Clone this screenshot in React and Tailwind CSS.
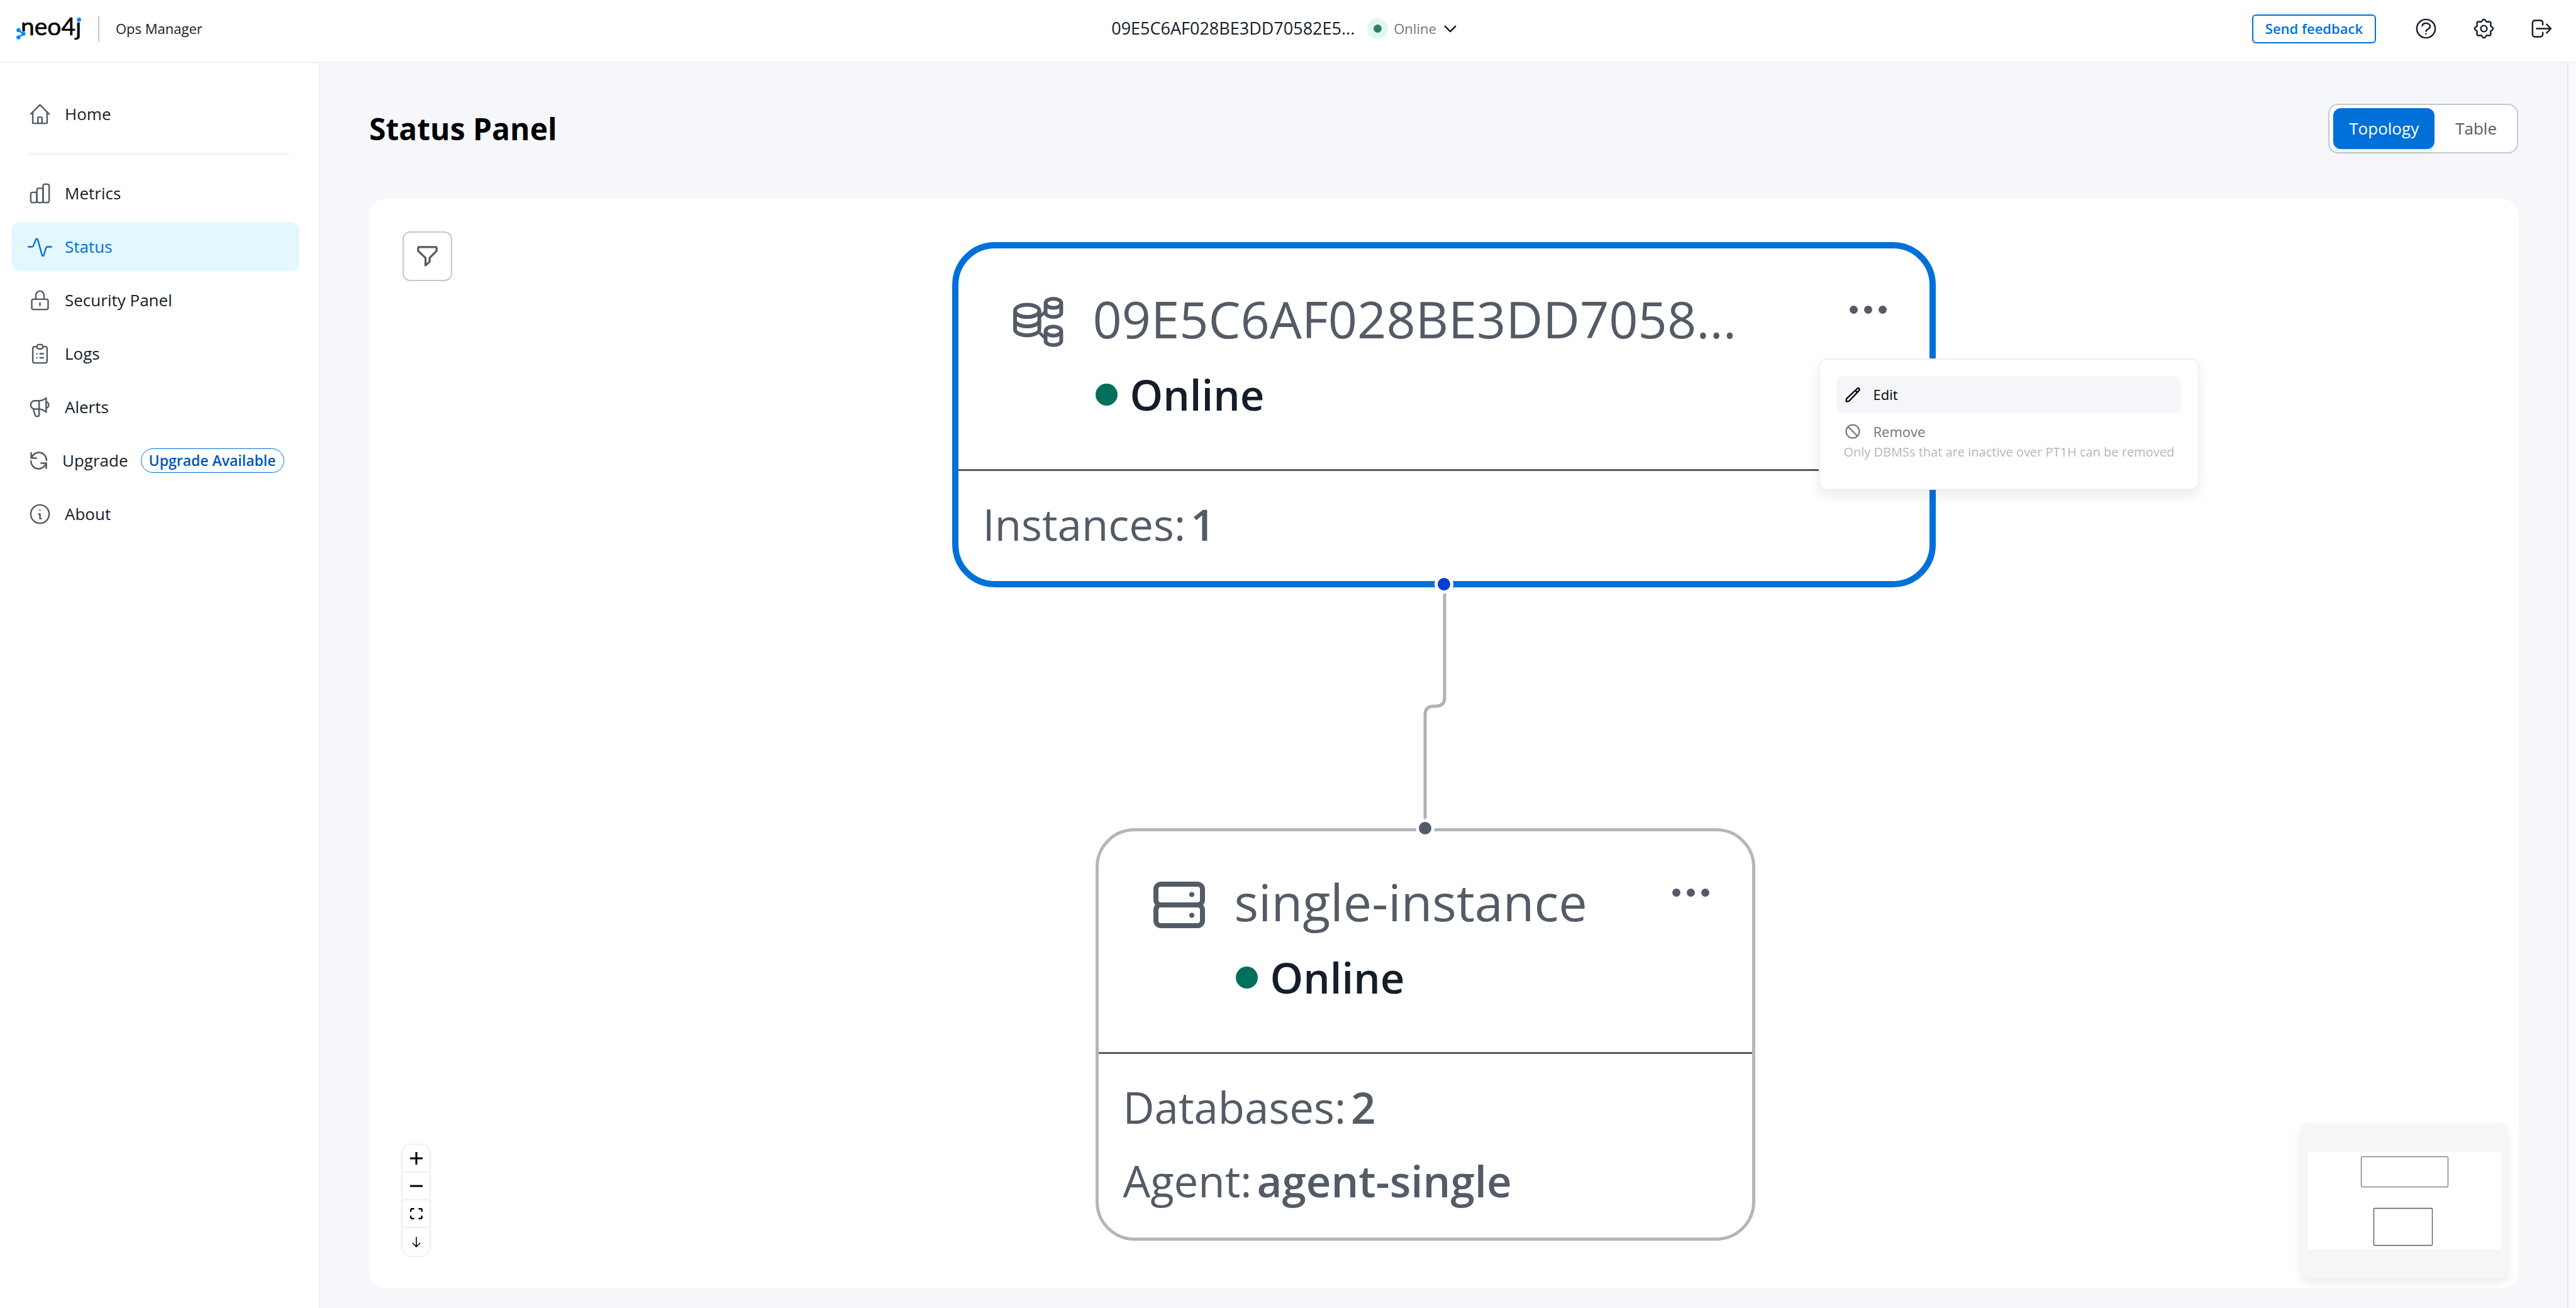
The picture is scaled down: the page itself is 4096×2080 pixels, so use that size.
import React from "react";

function Icon({ className = "size-[39px]", width = 1.5, children }) {
  return (
    <svg
      viewBox="0 0 24 24"
      fill="none"
      stroke="currentColor"
      strokeWidth={width}
      strokeLinecap="round"
      strokeLinejoin="round"
      className={`shrink-0 ${className}`}
      aria-hidden="true"
    >
      {children}
    </svg>
  );
}

const HomeIcon = () => (
  <Icon>
    <path d="M2.9 12 12 2.9 21.1 12" />
    <path d="M5 10v10.1a.9.9 0 0 0 .9.9h12.2a.9.9 0 0 0 .9-.9V10" />
    <path d="M10 21v-5.1a.9.9 0 0 1 .9-.9h2.2a.9.9 0 0 1 .9.9V21" />
  </Icon>
);

const MetricsIcon = () => (
  <Icon>
    <rect x="3" y="11" width="6" height="10" rx="1.8" />
    <rect x="9" y="7" width="6" height="14" rx="1.8" />
    <rect x="15" y="3" width="6" height="18" rx="1.8" />
  </Icon>
);

const StatusIcon = () => (
  <Icon>
    <path d="M.75 12h3.3c.7 0 1.3-.4 1.5-1l2.5-6.3c.3-.8 1.5-.8 1.7 0l4.4 15.6c.2.8 1.4.8 1.6 0l2.2-7.3c.2-.6.8-1 1.4-1h3.9" />
  </Icon>
);

const LockIcon = () => (
  <Icon>
    <rect x="4" y="11" width="16" height="10" rx="1.6" />
    <path d="M8 11V7a4 4 0 0 1 8 0v4M12 14.7v2.4" />
  </Icon>
);

const LogsIcon = () => (
  <Icon>
    <path d="M9 5H6.8A1.8 1.8 0 0 0 5 6.8V19.2A1.8 1.8 0 0 0 6.8 21h10.4A1.8 1.8 0 0 0 19 19.2V6.8A1.8 1.8 0 0 0 17.2 5H15" />
    <rect x="9" y="3" width="6" height="4.2" rx="2" />
    <path d="M9 12h.01M9 16h.01M12.2 12h3M12.2 16h3" />
  </Icon>
);

const AlertsIcon = () => (
  <Icon>
    <path d="M11.2 5.7H7.1a4.1 4.1 0 0 0 0 8.2h4.1Z" />
    <path d="M11.2 5.7c2.6-.1 4.9-1 6.9-2.7v13.9c-2-1.8-4.3-2.9-6.9-3" />
    <path d="M18.1 6.7a3.2 3.2 0 0 1 0 6.2" />
    <path d="m5.6 14 1.7 5.7c.6 2 3.9 1.7 3.9-.5V13.9" />
  </Icon>
);

const UpgradeIcon = () => (
  <Icon className="size-[35px]" width={1.7}>
    <path d="M3.8 3.6v5.6h5.6M4.3 8.9a8.3 8.3 0 0 1 16.2 2.7" />
    <path d="M20.3 20.4v-5.6h-5.6M19.8 15.1A8.3 8.3 0 0 1 3.6 12.5" />
  </Icon>
);

const InfoIcon = () => (
  <Icon>
    <circle cx="12" cy="12" r="9" />
    <path d="M10.8 12H12v4.4h1.3M12 8.1h.01" />
  </Icon>
);

const HelpIcon = () => (
  <Icon>
    <circle cx="12" cy="12" r="9" />
    <path d="M8.3 9.3c.2-1.5 1.7-2.5 3.8-2.5 2.2 0 3.9 1.2 3.9 3.1 0 1.5-1 2.1-2.2 2.7-1 .5-1.7 1-1.7 2M12 17.1h.01" />
  </Icon>
);

const gearOutline =
  Array.from({ length: 96 }, (_, i) => {
    const a = (i / 96) * Math.PI * 2;
    const r = 8.1 + 0.9 * Math.cos(8 * a);
    return `${i ? "L" : "M"}${(12 + r * Math.sin(a)).toFixed(2)} ${(12 - r * Math.cos(a)).toFixed(2)}`;
  }).join("") + "Z";

const GearIcon = () => (
  <Icon>
    <path d={gearOutline} />
    <circle cx="12" cy="12" r="3" />
  </Icon>
);

const LogoutIcon = () => (
  <Icon>
    <path d="M13 8.2V6.3A2.3 2.3 0 0 0 10.7 4H5.3A2.3 2.3 0 0 0 3 6.3v11.4A2.3 2.3 0 0 0 5.3 20h5.4a2.3 2.3 0 0 0 2.3-2.3v-1.9" />
    <path d="M7 12h14M16.8 7.8 21 12l-4.2 4.2" />
  </Icon>
);

const FunnelIcon = () => (
  <Icon width={2}>
    <path d="M3.6 3h16.8a.6.6 0 0 1 .6.6V6.8l-6.8 6.8v3.7L10.2 21v-7.4L3 6.8V3.6A.6.6 0 0 1 3.6 3Z" />
  </Icon>
);

const PencilIcon = () => (
  <Icon className="size-[28px]" width={2}>
    <path d="m16.9 4.5 1.4-1.4a1.9 1.9 0 0 1 2.6 2.6L7.2 20.1a2 2 0 0 1-.9.5L3.1 21.1l.3-3.3a2 2 0 0 1 .5-1Zm-1.4 1.4 2.7 2.7" />
  </Icon>
);

const ForbidIcon = () => (
  <Icon className="size-[28px]" width={1.8}>
    <circle cx="12" cy="12" r="9" />
    <path d="m5.7 5.7 12.6 12.6" />
  </Icon>
);

const ClusterIcon = () => (
  <svg viewBox="0 0 80 80" fill="none" stroke="currentColor" strokeWidth="6" className="size-20 shrink-0" aria-hidden="true">
    <ellipse cx="22.3" cy="22.3" rx="19.3" ry="9.8" />
    <path d="M3 22v30c0 5 8.6 9.3 19.3 9.3S41.6 57 41.6 52V22" />
    <path d="M3 37.5c0 5.2 8.6 9.5 19.3 9.5s19.3-4.3 19.3-9.5" />
    <ellipse cx="64" cy="10.3" rx="12.4" ry="7.3" />
    <path d="M51.6 10.3v15.2c0 3.6 5.5 6.5 12.4 6.5s12.4-2.9 12.4-6.5V10.3" />
    <ellipse cx="64" cy="54.5" rx="12.4" ry="7.3" />
    <path d="M51.6 54.5v15.7c0 3.6 5.5 6.5 12.4 6.5s12.4-2.9 12.4-6.5V54.5" />
    <path d="m42.5 31.5 8-7.5M42.5 57.5l8 8" strokeWidth="5" />
  </svg>
);

const ServerIcon = () => (
  <svg viewBox="0 0 82 80" fill="none" stroke="currentColor" strokeWidth="8" className="h-20 w-[82px] shrink-0" aria-hidden="true">
    <rect x="4" y="7" width="74" height="33" rx="8" />
    <rect x="4" y="40" width="74" height="33" rx="8" />
    <circle cx="61" cy="23.5" r="4" fill="currentColor" stroke="none" />
    <circle cx="61" cy="56.5" r="4" fill="currentColor" stroke="none" />
  </svg>
);

function Logo() {
  return (
    <svg viewBox="0 -6 106 52" className="h-[52px] w-[106px]" role="img" aria-label="neo4j">
      <text x="7" y="29.6" fontSize="39" fontFamily="Lato, sans-serif" fill="#000" stroke="#000" strokeWidth="0.6">
        neo4j
      </text>
      <rect x="0" y="24" width="15" height="12" fill="#fff" />
      <rect x="94" y="-2" width="12" height="10" fill="#fff" />
      <g fill="#018bff">
        <path d="M3.4 22 11.2 27.7l-7.8 5.8" fill="none" stroke="#018bff" strokeWidth="2.4" />
        <circle cx="3.4" cy="22" r="3.3" />
        <circle cx="11.2" cy="27.7" r="3.3" />
        <circle cx="3.4" cy="33.5" r="3.3" />
        <circle cx="99.6" cy="5.4" r="3.3" />
      </g>
    </svg>
  );
}

const nav = [
  { label: "Metrics", icon: MetricsIcon },
  { label: "Status", icon: StatusIcon, active: true },
  { label: "Security Panel", icon: LockIcon },
  { label: "Logs", icon: LogsIcon },
  { label: "Alerts", icon: AlertsIcon },
  { label: "Upgrade", icon: UpgradeIcon, badge: "Upgrade Available" },
  { label: "About", icon: InfoIcon },
];

function NavItem({ label, icon: Glyph, active, badge }) {
  return (
    <a
      href="#"
      aria-current={active ? "page" : undefined}
      className={`flex h-[78px] items-center gap-5 rounded-[13px] px-[26px] text-[26px] ${
        active ? "bg-[#e3f7ff] text-[#0070d9]" : "text-[#151d29]"
      }`}
    >
      <span className={active ? "text-[#0070d9]" : "text-[#535b66]"}>
        <Glyph />
      </span>
      {label}
      {badge && (
        <span className="flex h-[39px] items-center rounded-full border border-[#0070d9] px-3 text-[23px] font-semibold whitespace-nowrap text-[#0056b3]">
          {badge}
        </span>
      )}
    </a>
  );
}

function Header() {
  return (
    <header className="flex h-[100px] shrink-0 items-start border-b-2 border-[#eef1f6] bg-white">
      <div className="flex h-[91px] w-full items-center justify-between pr-[35px] pl-[26px]">
        <div className="flex flex-1 items-center">
          <Logo />
          <div className="ml-6 h-10 w-[2px] bg-[#c4c8cd]" />
          <span className="ml-[26px] text-[22px] text-[#151d29]">Ops Manager</span>
        </div>
        <button type="button" className="flex items-center text-[27px] text-[#151d29]">
          09E5C6AF028BE3DD70582E5...
          <span className="ml-5 flex size-[33px] items-center justify-center rounded-full bg-[#dff9ef]">
            <span className="size-[13px] rounded-full bg-[#327d60]" />
          </span>
          <span className="ml-[9px] text-[22px] text-[#717682]">Online</span>
          <Icon className="ml-2 size-[28px]" width={2.2}>
            <path d="m5 8.5 7 7 7-7" />
          </Icon>
        </button>
        <div className="flex flex-1 items-center justify-end text-[#151d29]">
          <button
            type="button"
            className="mr-[60px] h-[46px] rounded-[6px] border-2 border-[#0070d9] px-[19px] text-[22px] font-semibold text-[#0070d9]"
          >
            Send feedback
          </button>
          <div className="flex gap-[53px]">
            <button type="button" aria-label="Help"><HelpIcon /></button>
            <button type="button" aria-label="Settings"><GearIcon /></button>
            <button type="button" aria-label="Log out"><LogoutIcon /></button>
          </div>
        </div>
      </div>
    </header>
  );
}

function Node({ className, icon, title, rows }) {
  return (
    <article className={`absolute flex flex-col bg-white text-[#535b66] ${className}`}>
      <div className="flex h-[351px] items-start pr-[68px] pl-[87px]">
        <div className="pt-[57px]">
          <div className="flex items-end gap-[47px]">
            <span className="mb-[10px]">{icon}</span>
            <h2 className="text-[81px] leading-[110px] whitespace-nowrap">{title}</h2>
          </div>
          <div className="mt-[30px] ml-[131px] flex items-center gap-5 text-[67px] leading-[70px] font-semibold text-[#151d29]">
            <span className="size-[35px] rounded-full bg-[#006f5b]" />
            Online
          </div>
        </div>
        <button type="button" aria-label={`Options for ${title}`} className="mt-[91px] ml-auto flex gap-[10px]">
          <span className="size-[13px] rounded-full bg-current" />
          <span className="size-[13px] rounded-full bg-current" />
          <span className="size-[13px] rounded-full bg-current" />
        </button>
      </div>
      <dl className="border-t-[3px] border-[#535b66] px-[39px] pt-[26px] pb-8 text-[69px] leading-[117px]">
        {rows.map(([k, v]) => (
          <div key={k} className="flex gap-2">
            <dt>{k}:</dt>
            <dd className="font-semibold">{v}</dd>
          </div>
        ))}
      </dl>
    </article>
  );
}

function ContextMenu() {
  return (
    <div
      role="menu"
      className="absolute top-[185px] left-[1378px] rounded-[13px] border-2 border-[#eef1f6] bg-white px-[26px] pt-[26px] pb-[42px] text-[22px] whitespace-nowrap shadow-[0_10px_20px_rgba(12,26,37,0.08)]"
    >
      <button
        type="button"
        role="menuitem"
        className="flex h-[59px] w-full items-center gap-[19px] rounded-[12px] bg-[#f5f6fa] px-3 text-black"
      >
        <PencilIcon />
        Edit
      </button>
      <button type="button" role="menuitem" disabled className="flex flex-col px-3 pt-3 text-left">
        <span className="flex h-[34px] items-center gap-[19px] text-[#6f757e]">
          <ForbidIcon />
          Remove
        </span>
        <span className="text-[20px] leading-8 text-[#b3b8bf]">
          Only DBMSs that are inactive over PT1H can be removed
        </span>
      </button>
    </div>
  );
}

function Diagram() {
  return (
    <div className="relative mx-auto h-[1588px] w-[1564px]">
      <Node
        className="top-0 left-0 w-[1564px] rounded-[68px] border-[10px] border-[#0070d9]"
        icon={<ClusterIcon />}
        title="09E5C6AF028BE3DD7058..."
        rows={[["Instances", "1"]]}
      />
      <Node
        className="top-[932px] left-[228px] w-[1049px] rounded-[62px] border-[5px] border-[#b2b7bd]"
        icon={<ServerIcon />}
        title="single-instance"
        rows={[["Databases", "2"], ["Agent", "agent-single"]]}
      />
      <svg viewBox="0 0 60 420" className="absolute top-[530px] left-[738px] h-[420px] w-[60px]" aria-hidden="true">
        <path
          d="M45 14V194Q45 208 31 208H28Q14 208 14 222V402"
          fill="none"
          stroke="#b2b0b7"
          strokeWidth="5"
        />
        <circle cx="44" cy="14" r="12.5" fill="#003fd1" stroke="#fff" strokeWidth="5" />
        <circle cx="14" cy="402" r="12.5" fill="#535b66" stroke="#fff" strokeWidth="5" />
      </svg>
      <ContextMenu />
    </div>
  );
}

function Controls() {
  const button = "flex h-11 items-center justify-center";
  return (
    <div className="absolute bottom-[52px] left-[53px] flex w-[43px] flex-col divide-y-2 divide-[#eee] rounded-[13px] bg-white text-black shadow-[0_0_3px_2px_rgba(0,0,0,0.07)]">
      <button type="button" aria-label="Zoom in" className={button}>
        <svg viewBox="0 0 20 20" stroke="currentColor" strokeWidth="3" className="size-5"><path d="M0 10h20M10 0v20" /></svg>
      </button>
      <button type="button" aria-label="Zoom out" className={button}>
        <svg viewBox="0 0 20 20" stroke="currentColor" strokeWidth="3" className="size-5"><path d="M0 10h20" /></svg>
      </button>
      <button type="button" aria-label="Fit view" className={button}>
        <svg viewBox="0 0 20 18" fill="none" stroke="currentColor" strokeWidth="2.4" className="h-[18px] w-5">
          <path d="M1.2 6V3.2a2 2 0 0 1 2-2H6.5M13.5 1.2h3.3a2 2 0 0 1 2 2V6M18.8 12v2.8a2 2 0 0 1-2 2h-3.3M6.5 16.8H3.2a2 2 0 0 1-2-2V12" />
        </svg>
      </button>
      <button type="button" aria-label="Change layout direction" className={button}>
        <svg viewBox="0 0 14 18" fill="none" stroke="currentColor" strokeWidth="1.6" className="h-[18px] w-[14px]">
          <path d="M7 1v15.5M.8 10.5 7 16.6l6.2-6.1" />
        </svg>
      </button>
    </div>
  );
}

function MiniMap() {
  return (
    <div className="absolute right-[17px] bottom-[17px] flex h-[246px] w-[328px] items-center justify-center rounded-[13px] bg-[#f4f6f8] shadow-[0_7px_16px_rgba(12,26,37,0.09)]">
      <svg viewBox="0 0 307 155" className="h-[155px] w-[307px]" fill="none" stroke="#555" role="img" aria-label="Mini map">
        <rect width="307" height="155" fill="#fff" stroke="none" />
        <rect x="84.5" y="7.5" width="138" height="48" rx="1.5" />
        <rect x="104.5" y="89.5" width="93" height="59" rx="1.5" strokeWidth="1.3" />
      </svg>
    </div>
  );
}

export default function App() {
  return (
    <div className="flex min-h-screen flex-col bg-white font-['Open_Sans','Noto_Sans',sans-serif]">
      <Header />
      <div className="flex flex-1">
        <nav className="flex w-[509px] shrink-0 flex-col border-r-2 border-[#eef1f6] bg-white pt-[42px] pr-[31px] pl-[18px]">
          <NavItem label="Home" icon={HomeIcon} />
          <hr className="mt-6 mr-4 mb-[22px] ml-[26px] border-t-2 border-[#eef1f6]" />
          <div className="flex flex-col gap-[7px]">
            {nav.map((item) => (
              <NavItem key={item.label} {...item} />
            ))}
          </div>
        </nav>
        <main className="flex flex-1 flex-col bg-[#f5f7fb] px-[78px] pt-[65px] pb-[31px]">
          <div className="flex items-center justify-between">
            <h1 className="text-[48px] font-bold text-black">Status Panel</h1>
            <div className="flex h-[79px] items-center gap-[7px] rounded-[16px] border-2 border-[#c4c8cd] bg-white px-[6px] text-[26px]">
              <button
                type="button"
                aria-pressed="true"
                className="h-[65px] rounded-[12px] bg-[#0070d9] px-[25px] text-white shadow-[0_4px_10px_rgba(0,0,0,0.08)]"
              >
                Topology
              </button>
              <button type="button" aria-pressed="false" className="h-[65px] px-[26px] text-[#535b66]">
                Table
              </button>
            </div>
          </div>
          <section className="relative mt-[72px] flex-1 rounded-[26px] bg-white pt-[69px]">
            <Diagram />
            <button
              type="button"
              aria-label="Filter"
              className="absolute top-[52px] left-[53px] flex size-[79px] items-center justify-center rounded-[12px] border-2 border-[#c4c8cd] bg-white text-[#535b66]"
            >
              <FunnelIcon />
            </button>
            <Controls />
            <MiniMap />
          </section>
        </main>
        <div className="w-[14px] shrink-0 border-l-2 border-[#e8e8e8] bg-[#fafafa]" />
      </div>
    </div>
  );
}
